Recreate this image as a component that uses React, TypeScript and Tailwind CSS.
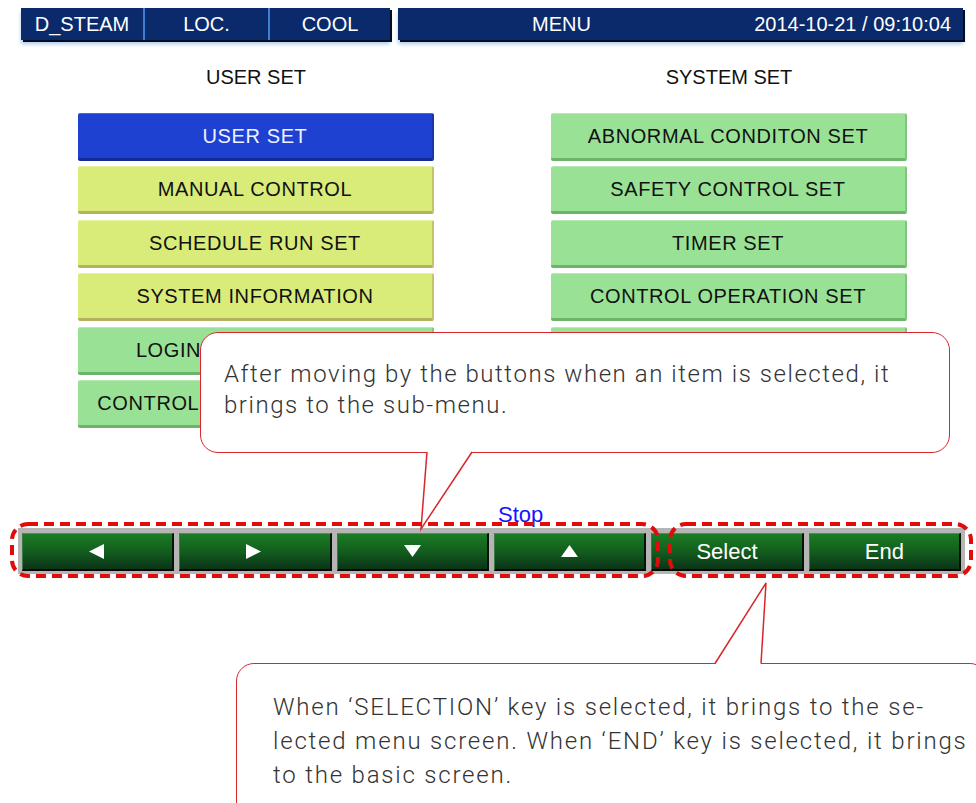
import React from "react";

type Tone = "blue" | "yellow" | "green";

const toneClass: Record<Tone, string> = {
  blue: "bg-[#1e41d2] text-[#eef3ff] border-b-[3px] border-b-[#142a98] border-r-2 border-r-[#1a35a8] border-t border-t-[#4a66de]",
  yellow: "bg-[#d9ec7a] text-[#111111] border-b-[3px] border-b-[#b4b25c] border-r-2 border-r-[#c3c468] border-t border-t-[#e6f3a4]",
  green: "bg-[#99e295] text-[#111111] border-b-[3px] border-b-[#6db46b] border-r-2 border-r-[#80c57d] border-t border-t-[#b6ecb3]",
};

const userItems: { label: string; tone: Tone }[] = [
  { label: "USER SET", tone: "blue" },
  { label: "MANUAL CONTROL", tone: "yellow" },
  { label: "SCHEDULE RUN SET", tone: "yellow" },
  { label: "SYSTEM INFORMATION", tone: "yellow" },
  { label: "LOGIN PASSWORD SET", tone: "green" },
  { label: "CONTROL PROGRAM VERSION", tone: "green" },
];

const systemItems: { label: string; tone: Tone }[] = [
  { label: "ABNORMAL CONDITON SET", tone: "green" },
  { label: "SAFETY CONTROL SET", tone: "green" },
  { label: "TIMER SET", tone: "green" },
  { label: "CONTROL OPERATION SET", tone: "green" },
  { label: "COMMUNICATION SET", tone: "green" },
  { label: "INITIALIZATION SET", tone: "green" },
];

const MenuColumn = ({ title, items }: { title: string; items: { label: string; tone: Tone }[] }) => (
  <div className="w-[356px] flex flex-col">
    <div className="h-[24px] text-center text-[20px] leading-[24px] text-[#111]">{title}</div>
    <div className="mt-[24px] flex flex-col gap-[5.4px]">
      {items.map((it) => (
        <div
          key={it.label}
          className={`h-[48px] rounded-[2px] flex items-center justify-center text-[20px] tracking-[0.6px] ${toneClass[it.tone]}`}
        >
          {it.label}
        </div>
      ))}
    </div>
  </div>
);

const Tri = ({ dir }: { dir: "left" | "right" | "down" | "up" }) => {
  const pts = {
    left: "15,0 15,15 0,7.5",
    right: "0,0 0,15 15,7.5",
    down: "0,1 17,1 8.5,13",
    up: "0,13 17,13 8.5,1",
  }[dir];
  return (
    <svg width="17" height="15" viewBox="0 0 17 15">
      <polygon points={pts} fill="#ffffff" />
    </svg>
  );
};

const BarButton = ({ children }: { children: React.ReactNode }) => (
  <div className="flex-1 h-[38px] flex items-center justify-center text-white text-[22px] bg-gradient-to-b from-[#1b7c24] via-[#125e1e] to-[#0a3417] border-t border-t-[#4f8f55] border-l border-l-[#3f7a45] border-b-2 border-b-[#020a03] border-r-2 border-r-[#041206]">
    {children}
  </div>
);

export default function App() {
  return (
    <div className="relative w-[976px] h-[803px] overflow-hidden bg-white font-['Liberation_Sans',Arial,sans-serif]">
      {/* status bar */}
      <div className="flex gap-[8px] pl-[21px] pt-[8px]">
        <div className="w-[369px] h-[32px] flex bg-[#0b2a6b] text-white text-[20px] shadow-[2px_2px_0_#020c22,0_4px_4px_#a9c9ea]">
          <div className="w-[122px] flex items-center justify-center">D_STEAM</div>
          <div className="w-[2px] bg-[#3d7fd1]" />
          <div className="w-[123px] flex items-center justify-center">LOC.</div>
          <div className="w-[2px] bg-[#3d7fd1]" />
          <div className="flex-1 flex items-center justify-center">COOL</div>
        </div>
        <div className="w-[565px] h-[32px] flex bg-[#0b2a6b] text-white text-[20px] shadow-[2px_2px_0_#020c22,0_4px_4px_#a9c9ea]">
          <div className="w-[327px] flex items-center justify-center">MENU</div>
          <div className="flex-1 flex items-center justify-end pr-[12px]">2014-10-21 / 09:10:04</div>
        </div>
      </div>

      {/* menu columns */}
      <div className="flex gap-[117px] pl-[78px] mt-[25px]">
        <MenuColumn title="USER SET" items={userItems} />
        <MenuColumn title="SYSTEM SET" items={systemItems} />
      </div>

      <div className="mt-[74px] h-[26px] pl-[498px] text-[22px] leading-[26px] text-[#1414ff]">Stop</div>

      {/* key bar */}
      <div className="ml-[18px] w-[947px] h-[46px] bg-[#b5b5b5] px-[4px] pt-[5px] flex gap-[5px]">
        <BarButton><Tri dir="left" /></BarButton>
        <BarButton><Tri dir="right" /></BarButton>
        <BarButton><Tri dir="down" /></BarButton>
        <BarButton><Tri dir="up" /></BarButton>
        <BarButton>Select</BarButton>
        <BarButton>End</BarButton>
      </div>

      {/* callouts */}
      <div className="absolute left-[200px] top-[332px] w-[750px] h-[121px] rounded-[18px] border-[1.5px] border-[#d8262a] bg-white pl-[23px] pt-[26px] font-['Roboto',sans-serif] font-light text-[24px] tracking-[1.55px] leading-[31px] text-[#333333] whitespace-nowrap">
        After moving by the buttons when an item is selected, it
        <br />
        brings to the sub-menu.
      </div>

      <div className="absolute left-[236px] top-[663px] w-[752px] h-[170px] rounded-[18px] border-[1.5px] border-[#d8262a] bg-white pl-[36px] pt-[26px] font-['Roboto',sans-serif] font-light text-[24px] tracking-[1.8px] leading-[34px] text-[#333333] whitespace-nowrap">
        When ‘SELECTION’ key is selected, it brings to the se-
        <br />
        lected menu screen. When ‘END’ key is selected, it brings
        <br />
        to the basic screen.
      </div>

      <svg className="absolute inset-0 pointer-events-none" width="976" height="803" viewBox="0 0 976 803">
        <polygon points="427,451 421,529 472,451" fill="#ffffff" />
        <polyline points="427,452 421,529 472,452" fill="none" stroke="#d8262a" strokeWidth="1.5" />
        <polygon points="715,664.5 766,583 761,664.5" fill="#ffffff" />
        <polyline points="715,663.5 766,583 761,663.5" fill="none" stroke="#d8262a" strokeWidth="1.5" />
        <rect x="12" y="524" width="646" height="52" rx="16" fill="none" stroke="#e00b0b" strokeWidth="4" strokeDasharray="10 6" />
        <rect x="670" y="524" width="301" height="52" rx="16" fill="none" stroke="#e00b0b" strokeWidth="4" strokeDasharray="10 6" />
      </svg>
    </div>
  );
}
